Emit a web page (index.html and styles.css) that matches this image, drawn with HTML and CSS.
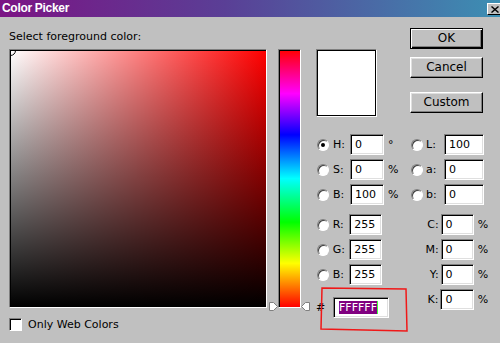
FILE: index.html
```html
<!DOCTYPE html>
<html lang="en">
<head>
  <meta charset="UTF-8">
  <title>Color Picker</title>
  <link rel="stylesheet" href="styles.css">
</head>
<body>
  <div class="dialog">
    <div class="titlebar">
      <span class="title">Color Picker</span>
      <span class="close">
        <svg width="8" height="7" viewBox="0 0 8 7"><path d="M0.5 0.5 L7.5 6.5 M7.5 0.5 L0.5 6.5" stroke="#000" stroke-width="1.4" fill="none"/></svg>
      </span>
    </div>

    <div class="content">
      <div class="left">
        <div class="prompt">Select foreground color:</div>
        <div class="pickers">
          <div class="square"><span class="marker"></span></div>
          <div class="hue-wrap">
            <div class="hue"></div>
            <svg class="arrow arrow-left" width="9" height="9" viewBox="0 0 9 9"><polygon points="0.5,0.5 4.5,0.5 8.5,4.5 4.5,8.5 0.5,8.5" fill="#fff" stroke="#808080"/></svg>
            <svg class="arrow arrow-right" width="9" height="9" viewBox="0 0 9 9"><polygon points="8.5,0.5 4.5,0.5 0.5,4.5 4.5,8.5 8.5,8.5" fill="#fff" stroke="#808080"/></svg>
          </div>
        </div>
        <div class="webonly"><span class="checkbox"></span>Only Web Colors</div>
      </div>

      <div class="right">
        <div class="top">
          <div class="swatch"></div>
          <div class="buttons">
            <div class="btn btn-default">OK</div>
            <div class="btn">Cancel</div>
            <div class="btn btn-custom">Custom</div>
          </div>
        </div>

        <div class="fields">
          <div class="row">
            <span class="radio checked"></span><span class="lbl">H:</span><span class="field">0</span><span class="unit">°</span>
            <span class="radio radio-2"></span><span class="lbl lbl-2">L:</span><span class="field wide">100</span>
          </div>
          <div class="row">
            <span class="radio"></span><span class="lbl">S:</span><span class="field">0</span><span class="unit">%</span>
            <span class="radio radio-2"></span><span class="lbl lbl-2">a:</span><span class="field wide">0</span>
          </div>
          <div class="row">
            <span class="radio"></span><span class="lbl">B:</span><span class="field">100</span><span class="unit">%</span>
            <span class="radio radio-2"></span><span class="lbl lbl-2">b:</span><span class="field wide">0</span>
          </div>
          <div class="row row-rgb">
            <span class="radio"></span><span class="lbl">R:</span><span class="field">255</span><span class="unit"></span>
            <span class="lbl lbl-right">C:</span><span class="field">0</span><span class="unit">%</span>
          </div>
          <div class="row">
            <span class="radio"></span><span class="lbl">G:</span><span class="field">255</span><span class="unit"></span>
            <span class="lbl lbl-right">M:</span><span class="field">0</span><span class="unit">%</span>
          </div>
          <div class="row">
            <span class="radio"></span><span class="lbl">B:</span><span class="field">255</span><span class="unit"></span>
            <span class="lbl lbl-right">Y:</span><span class="field">0</span><span class="unit">%</span>
          </div>
          <div class="row">
            <div class="hex-group">
              <span class="hash">#</span><span class="field hex"><span class="selected">FFFFFF</span><span class="caret"></span></span>
            </div>
            <span class="lbl lbl-right">K:</span><span class="field">0</span><span class="unit">%</span>
          </div>
        </div>
      </div>
    </div>

    <svg class="annotation" width="500" height="343" viewBox="0 0 500 343">
      <polygon points="322,288 406,289 407,331 321,329" fill="none" stroke="#f01818" stroke-width="1.5"/>
    </svg>
  </div>
</body>
</html>
```

FILE: styles.css
```css
body {
  margin: 0;
  padding: 0;
  background: #c0c0c0;
  font-family: "DejaVu Sans", Verdana, sans-serif;
  font-size: 11px;
  color: #000000;
}

.dialog {
  position: relative;
  width: 500px;
  height: 343px;
  overflow: hidden;
  background: #c0c0c0;
}

/* title bar */
.titlebar {
  display: flex;
  justify-content: space-between;
  height: 17px;
  background: linear-gradient(to right, #7b1484, #5a3f96 45%, #3c8fb3);
  overflow: hidden;
}

.title {
  padding-left: 2px;
  line-height: 17px;
  font-family: "Liberation Sans", Arial, sans-serif;
  font-size: 12px;
  font-weight: bold;
  letter-spacing: -0.3px;
  color: #ffffff;
}

.close {
  display: flex;
  align-items: center;
  justify-content: center;
  width: 16px;
  height: 12px;
  margin-top: 3px;
  margin-right: -3px;
  background: #c0c0c0;
  border: 1px solid;
  border-color: #ffffff #000000 #000000 #ffffff;
  box-sizing: border-box;
}

/* main area */
.content {
  display: flex;
  padding-left: 9px;
}

.left {
  width: 292px;
}

.prompt {
  margin-top: 13px;
  margin-bottom: 6px;
  line-height: 13px;
}

.pickers {
  display: flex;
  gap: 11px;
}

.square {
  position: relative;
  width: 259px;
  height: 259px;
  box-sizing: border-box;
  border: 1px solid;
  border-color: #808080 #ffffff #ffffff #808080;
  background:
    linear-gradient(to top, #000000, rgba(0, 0, 0, 0)),
    linear-gradient(to right, #ffffff, #ff0000);
  box-shadow: inset 1px 1px #000000;
  overflow: hidden;
}

.marker {
  position: absolute;
  left: -5px;
  top: -5px;
  width: 9px;
  height: 9px;
  border: 1px solid #000000;
  border-radius: 50%;
}

.hue-wrap {
  position: relative;
}

.hue {
  width: 23px;
  height: 259px;
  box-sizing: border-box;
  border: 1px solid;
  border-color: #808080 #ffffff #ffffff #808080;
  background: linear-gradient(to bottom, #ff0000, #ff00ff 17%, #0000ff 33%, #00ffff 50%, #00ff00 67%, #ffff00 83%, #ff0000);
  box-shadow: inset 1px 1px #000000;
}

.arrow {
  position: absolute;
  top: 253px;
}

.arrow-left {
  left: -9px;
}

.arrow-right {
  right: -9px;
}

.webonly {
  display: flex;
  align-items: center;
  gap: 6px;
  margin-top: 10px;
  line-height: 13px;
}

.checkbox {
  width: 13px;
  height: 13px;
  box-sizing: border-box;
  background: #ffffff;
  border: 1px solid;
  border-color: #808080 #ffffff #ffffff #808080;
  box-shadow: inset 1px 1px #000000;
}

/* right side */
.right {
  width: 184px;
  margin-left: 15px;
}

.top {
  display: flex;
  align-items: flex-start;
}

.swatch {
  width: 61px;
  height: 68px;
  margin-top: 32px;
  box-sizing: border-box;
  background: #ffffff;
  border: 1px solid;
  border-color: #808080 #ffffff #ffffff #808080;
  box-shadow: inset 1px 1px #000000, inset -1px -1px #000000;
}

.buttons {
  display: flex;
  flex-direction: column;
  gap: 8px;
  margin-top: 11px;
  margin-left: 33px;
}

.btn {
  width: 73px;
  height: 21px;
  box-sizing: border-box;
  line-height: 19px;
  text-align: center;
  font-size: 12px;
  border: 1px solid;
  border-color: #ffffff #000000 #000000 #ffffff;
  box-shadow: inset -1px -1px #808080, inset 1px 1px #dfdfdf;
}

.btn-default {
  border-color: #000000;
  box-shadow: inset 1px 1px #ffffff, inset -1px -1px #000000, inset -2px -2px #808080;
}

.btn-custom {
  margin-top: 6px;
}

/* value fields */
.fields {
  display: flex;
  flex-direction: column;
  gap: 4px;
  margin-top: 17px;
}

.row {
  display: flex;
  align-items: center;
  height: 21px;
}

.row-rgb {
  margin-top: 5px;
}

.radio {
  position: relative;
  width: 12px;
  height: 12px;
  margin-left: 1px;
  margin-right: 4px;
  box-sizing: border-box;
  border-radius: 50%;
  background: #ffffff;
  border: 1px solid;
  border-color: #808080 #ffffff #ffffff #808080;
  box-shadow: inset 1px 1px #404040;
}

.radio.checked::after {
  content: "";
  position: absolute;
  left: 3px;
  top: 3px;
  width: 4px;
  height: 4px;
  border-radius: 50%;
  background: #000000;
}

.radio-2 {
  margin-left: 0;
  margin-right: 3px;
}

.lbl {
  width: 17px;
}

.lbl-2 {
  width: 18px;
}

.lbl-right {
  width: 31px;
  padding-right: 2px;
  text-align: right;
}

.field {
  display: flex;
  align-items: center;
  width: 34px;
  height: 21px;
  box-sizing: border-box;
  padding-left: 4px;
  background: #ffffff;
  border: 1px solid;
  border-color: #808080 #ffffff #ffffff #808080;
  box-shadow: inset 1px 1px #000000, inset -1px -1px #dfdfdf;
}

.field.wide {
  width: 40px;
}

.unit {
  width: 27px;
  padding-left: 4px;
  box-sizing: border-box;
}

.hex-group {
  display: flex;
  align-items: center;
  align-self: flex-start;
  width: 95px;
  margin-top: 8px;
}

.hash {
  width: 17px;
}

.field.hex {
  width: 56px;
  padding-left: 5px;
}

.selected {
  background: #800080;
  color: #ffffff;
  line-height: 13px;
}

.caret {
  width: 1px;
  height: 13px;
  background: #40ff40;
}

.annotation {
  position: absolute;
  left: 0;
  top: 0;
  pointer-events: none;
}
```
